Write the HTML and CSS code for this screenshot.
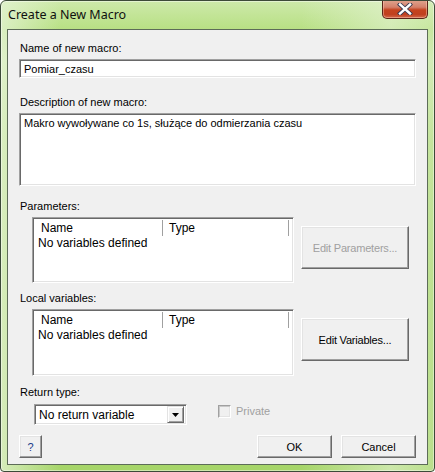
FILE: index.html
```html
<!DOCTYPE html>
<html>
<head>
<meta charset="utf-8">
<link rel="stylesheet" href="styles.css">
</head>
<body>
<div class="window">
  <div class="titlebar">
    <span class="title">Create a New Macro</span>
    <div class="close">
      <svg width="16" height="12" viewBox="0 0 16 12">
        <path d="M3 1.5 L13 10.5 M13 1.5 L3 10.5" stroke="#3a3a50" stroke-width="4.2" stroke-linecap="square" fill="none"/>
        <path d="M3 1.5 L13 10.5 M13 1.5 L3 10.5" stroke="#ffffff" stroke-width="2.4" stroke-linecap="square" fill="none"/>
      </svg>
    </div>
  </div>
  <div class="client">
    <div class="lbl first">Name of new macro:</div>
    <div class="field input">Pomiar_czasu</div>
    <div class="lbl l-desc">Description of new macro:</div>
    <div class="field textarea">Makro wywoływane co 1s, służące do odmierzania czasu</div>
    <div class="lbl l-params">Parameters:</div>
    <div class="listrow">
      <div class="field list">
        <div class="lhead"><span class="hc c1">Name</span><span class="hc c2">Type</span></div>
        <div class="litem">No variables defined</div>
      </div>
      <div class="btn big disabled">Edit Parameters...</div>
    </div>
    <div class="lbl l-locals">Local variables:</div>
    <div class="listrow">
      <div class="field list list2">
        <div class="lhead"><span class="hc c1">Name</span><span class="hc c2">Type</span></div>
        <div class="litem">No variables defined</div>
      </div>
      <div class="btn big">Edit Variables...</div>
    </div>
    <div class="lbl l-ret">Return type:</div>
    <div class="comborow">
      <div class="field combo">
        <span class="ctext">No return variable</span>
        <span class="cbtn"><svg width="7" height="4" viewBox="0 0 7 4"><path d="M0 0 H7 L3.5 4 Z" fill="#000"/></svg></span>
      </div>
      <label class="check"><span class="box"></span><span class="ctxt">Private</span></label>
    </div>
    <div class="bottomrow">
      <div class="btn help">?</div>
      <div class="spacer"></div>
      <div class="btn std">OK</div>
      <div class="btn std cancel">Cancel</div>
    </div>
  </div>
</div>
</body>
</html>
```
FILE: styles.css
```css
html, body {
  margin: 0;
  padding: 0;
  background: #ffffff;
}
.window {
  width: 435px;
  height: 472px;
  box-sizing: border-box;
  border: 1px solid #3c4a38;
  border-radius: 6px 6px 4px 4px;
  background:
    linear-gradient(90deg, rgba(230,244,214,0.75) 0px, rgba(255,255,255,0) 60px, rgba(255,255,255,0) 300px, rgba(230,244,214,0.6) 390px, rgba(230,244,214,0.3) 435px),
    linear-gradient(to bottom, #cde9aa 0px, #b8e084 28px, #c9e7a6 60px, #b4dc80 140px, #a8d66c 300px, #a6d569 472px);
  box-shadow: inset 0 0 0 1px rgba(255,255,255,0.45);
  font-family: "Liberation Sans", Arial, sans-serif;
  font-size: 11px;
  color: #000;
  overflow: hidden;
}
.titlebar {
  height: 28px;
  display: flex;
  align-items: flex-start;
  justify-content: space-between;
  padding: 0 6px 0 7px;
}
.title {
  font-family: "Noto Sans", "Open Sans", sans-serif;
  font-size: 12.5px;
  line-height: 16px;
  margin-top: 6px;
  color: #101010;
}
.close {
  width: 44px;
  height: 18px;
  margin-top: -1px;
  border: 1px solid #5a2418;
  border-top: none;
  border-radius: 0 0 5px 5px;
  background: linear-gradient(to bottom, #e0a58f 0%, #d4806a 40%, #c5431f 55%, #c0401f 80%, #d4694c 100%);
  box-shadow: inset 0 0 0 1px rgba(255,210,190,0.45);
  display: flex;
  align-items: center;
  justify-content: center;
}
.close svg { display: block; }
.client {
  margin-left: 6px;
  width: 421px;
  height: 436px;
  box-sizing: border-box;
  border: 1px solid #5d6c58;
  background: #f0f0f0;
  padding: 0 11px 0 11px;
  display: flex;
  flex-direction: column;
}
.lbl {
  line-height: 13px;
  height: 13px;
  padding-left: 1px;
  white-space: nowrap;
}
.lbl.first { margin-top: 12px; }
.field {
  background: #fff;
  box-sizing: border-box;
  border-top: 1px solid #a0a0a0;
  border-left: 1px solid #a0a0a0;
  border-right: 1px solid #ffffff;
  border-bottom: 1px solid #ffffff;
  box-shadow: inset 1px 1px 0 #696969, inset -1px -1px 0 #e3e3e3;
}
.input {
  margin-top: 4px;
  height: 19px;
  line-height: 15px;
  padding: 2px 4px 0 4px;
}
.l-desc { margin-top: 18px; }
.textarea {
  margin-top: 4px;
  height: 73px;
  padding: 3px 4px 0 4px;
  line-height: 13px;
}
.l-params { margin-top: 14px; }
.listrow {
  margin-top: 4px;
  display: flex;
  align-items: flex-start;
  padding-left: 13px;
}
.list {
  width: 262px;
  height: 66px;
  padding: 2px 2px 0 2px;
  font-size: 12px;
}
.list2 { height: 67px; }
.lhead {
  display: flex;
  height: 16px;
  line-height: 16px;
  margin-right: 2px;
  border-right: 1px solid #a0a0a0;
}
.hc {
  box-sizing: border-box;
  border-right: 1px solid #a0a0a0;
  padding-left: 6px;
}
.c1 { width: 128px; }
.c2 { flex: 1; border-right: none; }
.litem {
  padding-left: 3px;
  line-height: 15px;
}
.btn {
  box-sizing: border-box;
  background: #f0f0f0;
  border-top: 1px solid #ffffff;
  border-left: 1px solid #ffffff;
  border-right: 1px solid #696969;
  border-bottom: 1px solid #696969;
  box-shadow: inset -1px -1px 0 #a0a0a0, inset 1px 1px 0 #e3e3e3;
  display: flex;
  align-items: center;
  justify-content: center;
  white-space: nowrap;
}
.btn.big {
  width: 108px;
  height: 43px;
  margin-left: 7px;
  margin-top: 9px;
  letter-spacing: -0.2px;
}
.btn.disabled { color: #a0a0a0; }
.l-locals { margin-top: 9px; }
.l-ret { margin-top: 10px; }
.comborow {
  margin-top: 5px;
  display: flex;
  align-items: flex-start;
  padding-left: 15px;
}
.combo {
  width: 153px;
  height: 21px;
  display: flex;
  align-items: center;
  padding: 2px 2px 2px 4px;
}
.ctext { flex: 1; font-size: 12px; }
.cbtn {
  width: 17px;
  height: 17px;
  box-sizing: border-box;
  background: #f0f0f0;
  border-top: 1px solid #e3e3e3;
  border-left: 1px solid #e3e3e3;
  border-right: 1px solid #696969;
  border-bottom: 1px solid #696969;
  box-shadow: inset 1px 1px 0 #fff, inset -1px -1px 0 #a0a0a0;
  display: flex;
  align-items: center;
  justify-content: center;
}
.cbtn svg { display: block; }
.check {
  display: flex;
  align-items: center;
  margin-left: 31px;
  margin-top: 1px;
  color: #a0a0a0;
}
.box {
  width: 13px;
  height: 13px;
  box-sizing: border-box;
  border-top: 1px solid #a0a0a0;
  border-left: 1px solid #a0a0a0;
  border-right: 1px solid #fff;
  border-bottom: 1px solid #fff;
  box-shadow: inset 1px 1px 0 #c8c8c8, inset -1px -1px 0 #e3e3e3;
  background: #f0f0f0;
}
.ctxt { margin-left: 5px; line-height: 13px; }
.bottomrow {
  margin-top: 10px;
  display: flex;
  align-items: flex-start;
}
.btn.help {
  width: 23px;
  height: 23px;
  color: #1a3a8a;
}
.spacer { flex: 1; }
.btn.std {
  width: 75px;
  height: 23px;
}
.btn.cancel { margin-left: 9px; }
```
